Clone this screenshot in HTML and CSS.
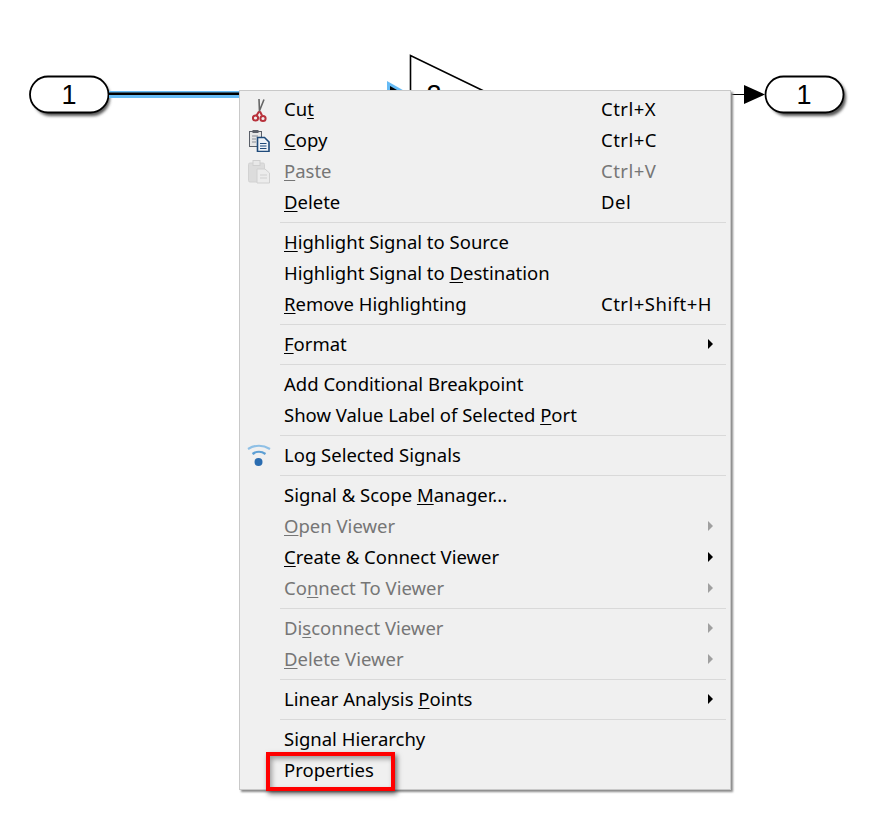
FILE: index.html
```html
<!DOCTYPE html>
<html lang="en">
<head>
<meta charset="utf-8">
<title>Signal context menu</title>
<link rel="stylesheet" href="styles.css">
</head>
<body>
<div class="canvas">
  <svg class="diagram" width="874" height="838" viewBox="0 0 874 838">
    <defs>
      <filter id="sh" x="-20%" y="-30%" width="140%" height="170%">
        <feGaussianBlur stdDeviation="1.500"/>
      </filter>
    </defs>
    <rect x="33" y="79" width="77" height="37" rx="18" fill="#555" filter="url(#sh)"/>
    <rect x="30" y="76.500" width="78.500" height="36" rx="18" fill="#fff" stroke="#000" stroke-width="1.800"/>
    <text x="69" y="103.500" class="port">1</text>
    <rect x="109" y="91" width="135" height="7" fill="#66bbf5"/>
    <rect x="109" y="92.500" width="135" height="2.500" fill="#000"/>
    <path d="M387 81 L408 93 L387 104 Z" fill="#66bbf5"/>
    <path d="M390 86 L404 94 L390 104 Z" fill="#000"/>
    <path d="M410.500 55.500 L410.500 130 L490 94 Z" fill="#fff" stroke="#000" stroke-width="1.600"/>
    <text x="434" y="104" class="port">2</text>
    <rect x="730" y="94" width="15" height="1" fill="#000"/>
    <path d="M744 85 L765 94.500 L744 104 Z" fill="#000"/>
    <rect x="769" y="79" width="77" height="37" rx="18" fill="#555" filter="url(#sh)"/>
    <rect x="765.500" y="76.500" width="78" height="36" rx="18" fill="#fff" stroke="#000" stroke-width="1.800"/>
    <text x="804" y="103.500" class="port">1</text>
  </svg>

  <div class="menu">
    <div class="group">
      <div class="item">
        <svg class="icon icon-cut" width="15" height="25" viewBox="0 0 15 25"><path d="M7 1 L7.500 14 M12 1.500 L7 14" stroke="#666" stroke-width="1.600" fill="none"/><circle cx="3.500" cy="20" r="2.600" fill="none" stroke="#b8323c" stroke-width="2"/><circle cx="11" cy="20.500" r="2.600" fill="none" stroke="#b8323c" stroke-width="2"/><path d="M7 13.500 L4.500 17.500 M8 13.500 L10 17.500" stroke="#b8323c" stroke-width="2"/></svg>
        <span class="label">Cu<u>t</u></span><span class="key">Ctrl+X</span>
      </div>
      <div class="item">
        <svg class="icon icon-copy" width="21" height="22" viewBox="0 0 21 22"><rect x="0.500" y="1.500" width="12" height="15" fill="#e6e6e6" stroke="#5a5f68"/><rect x="3.500" y="0" width="6" height="3" fill="#5a5f68"/><path d="M3 6 h6 M3 9 h4 M3 12 h4" stroke="#8a8f98"/><path d="M8.500 7.500 h7 l4.500 4.500 v9.500 H8.500 Z" fill="#eef3f8" stroke="#1f4a7a" stroke-width="1.600"/><path d="M11 13.500 h6.500 M11 16 h6.500 M11 18.500 h6.500" stroke="#1f4a7a" stroke-width="1.200"/></svg>
        <span class="label"><u>C</u>opy</span><span class="key">Ctrl+C</span>
      </div>
      <div class="item off">
        <svg class="icon icon-paste" width="22" height="24" viewBox="0 0 22 24"><rect x="0.500" y="3" width="16" height="19" rx="1.500" fill="#dcdcdc" stroke="#d2d2d2"/><rect x="5" y="0.500" width="7" height="5" fill="#e8e8e8" stroke="#cfcfcf"/><path d="M9 9 h8 l4.500 4 v10 H9 Z" fill="#ececec" stroke="#d0d0d0"/><path d="M12 15 h7 M12 18 h7" stroke="#d0d0d0"/></svg>
        <span class="label"><u>P</u>aste</span><span class="key">Ctrl+V</span>
      </div>
      <div class="item"><span class="label"><u>D</u>elete</span><span class="key">Del</span></div>
    </div>
    <div class="group">
      <div class="item"><span class="label"><u>H</u>ighlight Signal to Source</span></div>
      <div class="item"><span class="label">Highlight Signal to <u>D</u>estination</span></div>
      <div class="item"><span class="label"><u>R</u>emove Highlighting</span><span class="key">Ctrl+Shift+H</span></div>
    </div>
    <div class="group">
      <div class="item sub"><span class="label"><u>F</u>ormat</span></div>
    </div>
    <div class="group">
      <div class="item"><span class="label">Add Conditional Breakpoint</span></div>
      <div class="item"><span class="label">Show Value Label of Selected <u>P</u>ort</span></div>
    </div>
    <div class="group">
      <div class="item">
        <svg class="icon icon-log" width="24" height="24" viewBox="0 0 24 24"><path d="M1 5 Q12 -1.500 23 5" stroke="#8fc0e6" stroke-width="2.200" fill="none"/><path d="M5.500 10 Q12 5.500 18.500 10" stroke="#5d9fd4" stroke-width="2.200" fill="none"/><circle cx="11.500" cy="18" r="4" fill="#2a6cb0"/></svg>
        <span class="label">Log Selected Signals</span>
      </div>
    </div>
    <div class="group">
      <div class="item"><span class="label">Signal &amp; Scope <u>M</u>anager...</span></div>
      <div class="item sub off"><span class="label"><u>O</u>pen Viewer</span></div>
      <div class="item sub"><span class="label"><u>C</u>reate &amp; Connect Viewer</span></div>
      <div class="item sub off"><span class="label">Co<u>n</u>nect To Viewer</span></div>
    </div>
    <div class="group">
      <div class="item sub off"><span class="label">Di<u>s</u>connect Viewer</span></div>
      <div class="item sub off"><span class="label"><u>D</u>elete Viewer</span></div>
    </div>
    <div class="group">
      <div class="item sub"><span class="label">Linear Analysis <u>P</u>oints</span></div>
    </div>
    <div class="group">
      <div class="item"><span class="label">Signal Hierarchy</span></div>
      <div class="item"><span class="label">Properties</span></div>
    </div>
  </div>
  <div class="callout"></div>
</div>
</body>
</html>
```
FILE: styles.css
```css
html, body { margin: 0; padding: 0; background: #fff; }
.canvas { position: relative; width: 874px; height: 838px; overflow: hidden; }
.diagram { position: absolute; left: 0; top: 0; }
.port { font: 27px "Liberation Sans", Arial, sans-serif; text-anchor: middle; fill: #000; }
.menu {
  position: absolute; left: 239px; top: 90px; width: 492px; height: 700px;
  box-sizing: border-box; background: #f0f0f0; border: 1px solid #c9c9c9;
  box-shadow: 2px 2px 2px #8a8a8a; padding-top: 3px;
  font: 18.500px "Noto Sans", "Open Sans", sans-serif; color: #000;
}
.group { padding: 0 0 4.500px; margin-bottom: 4.500px; position: relative; }
.group:not(:last-child)::after {
  content: ""; position: absolute; left: 40px; right: 4px; bottom: 0; height: 1px; background: #d9d9d9;
}
.item { position: relative; height: 31px; line-height: 30px; white-space: nowrap; padding-left: 44px; }
.icon { position: absolute; }
.icon-cut { left: 12px; top: 4px; }
.icon-copy { left: 9px; top: 5px; }
.icon-paste { left: 8px; top: 4px; }
.icon-log { left: 7px; top: 4px; }
.key { position: absolute; left: 361px; top: 0; letter-spacing: .5px; }
.off { color: #767676; }
.sub::after {
  content: ""; position: absolute; left: 468px; top: 10px;
  border-left: 5px solid #000; border-top: 5px solid transparent; border-bottom: 5px solid transparent;
}
.sub.off::after { border-left-color: #a0a0a0; }
u { text-underline-offset: 2px; text-decoration-thickness: 1px; }
.callout {
  position: absolute; left: 266px; top: 752px; width: 129px; height: 39px; box-sizing: border-box;
  border: 4px solid #f00; box-shadow: 2px 3px 5px rgba(0,0,0,.55), inset 2px 3px 5px rgba(0,0,0,.35);
}
```
